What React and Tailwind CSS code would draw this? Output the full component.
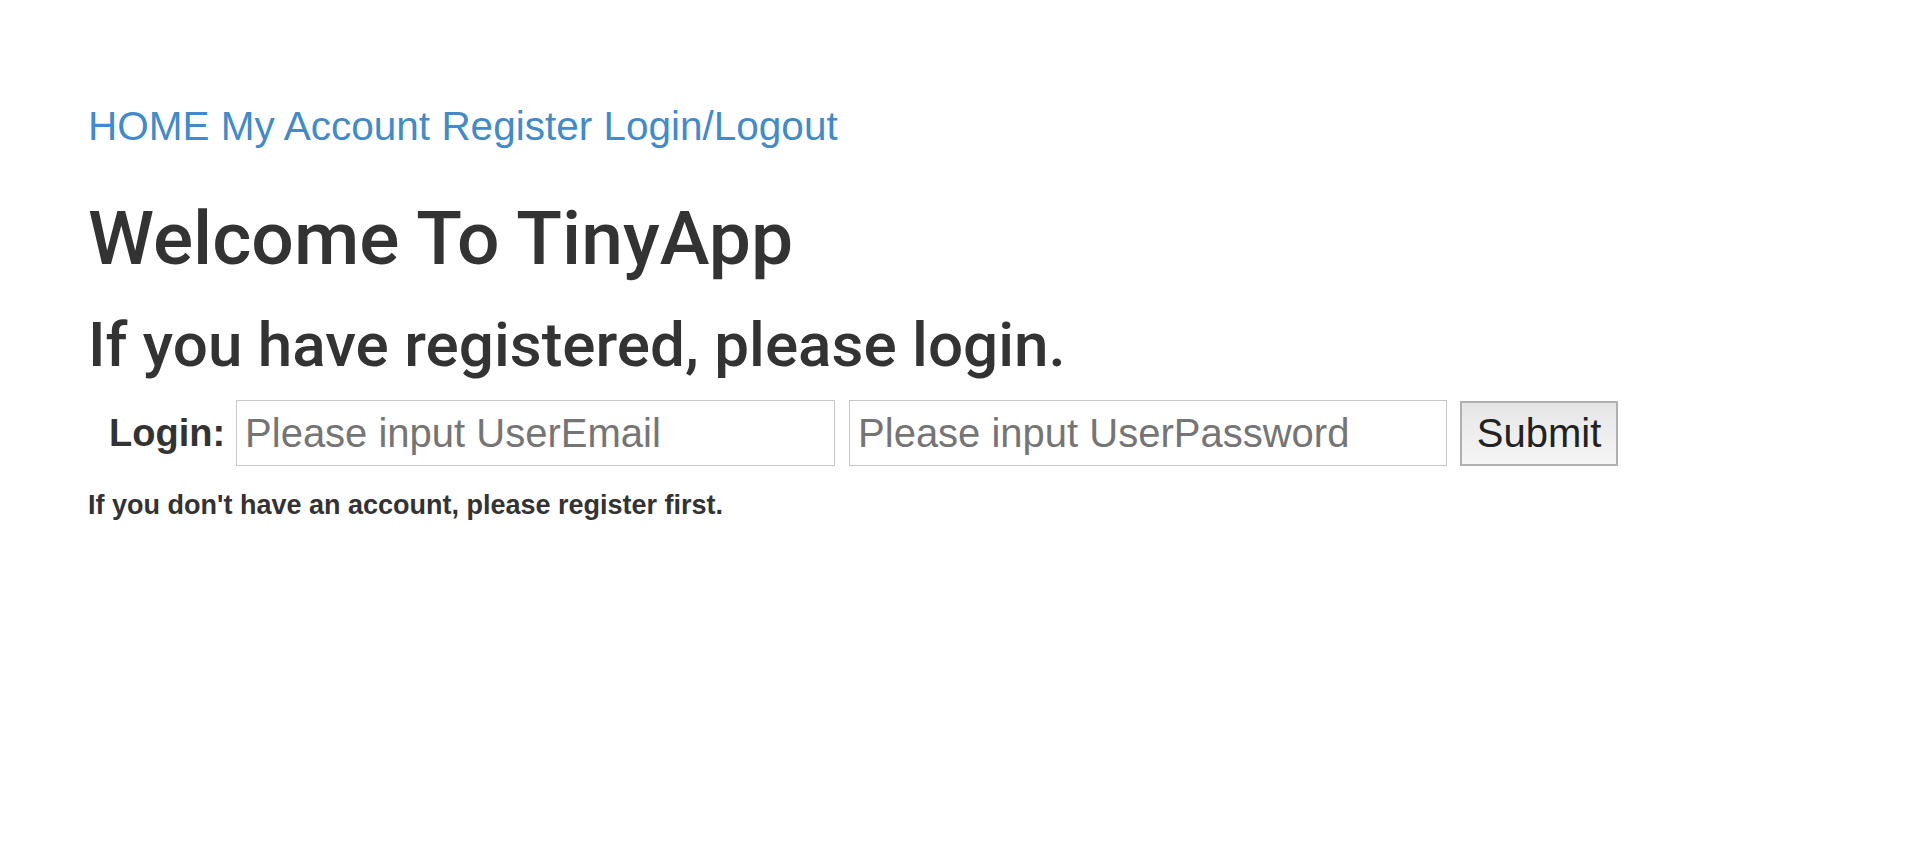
import React from 'react';

// --- Main App Component ---
export default function App() {
  return (
    <div className="min-h-screen bg-white text-[#333333] font-['Liberation_Sans',Arial,sans-serif] pl-[88px] pt-[104px]">
      <Nav />
      <h1 className="mt-[49px] text-[75px] leading-[82px] font-medium font-['Roboto','Liberation_Sans',sans-serif]">Welcome To TinyApp</h1>
      <h2 className="mt-[32px] text-[62px] leading-[68px] font-medium font-['Roboto','Liberation_Sans',sans-serif]">If you have registered, please login.</h2>
      <LoginForm />
      <p className="mt-[23px] text-[27px] leading-[33px] font-bold">If you don't have an account, please register first.</p>
    </div>
  );
}

// --- UI Components ---

const Nav = () => (
  <nav className="text-[40.5px] leading-[44px] text-[#428bca]">
    <a href="#" className="hover:underline">HOME</a>{' '}
    <a href="#" className="hover:underline">My Account</a>{' '}
    <a href="#" className="hover:underline">Register</a>{' '}
    <a href="#" className="hover:underline">Login/Logout</a>
  </nav>
);

const LoginForm = () => (
  <form className="mt-[21px] flex items-center pl-[21px]" onSubmit={(e) => e.preventDefault()}>
    <label className="text-[38px] font-bold mr-[11px]">Login:</label>
    <input
      type="text"
      placeholder="Please input UserEmail"
      className="w-[599px] h-[66px] border border-[#c8c8c8] px-[8px] text-[40px] placeholder:text-[#757575] outline-none"
    />
    <input
      type="password"
      placeholder="Please input UserPassword"
      className="ml-[14px] w-[598px] h-[66px] border border-[#c8c8c8] px-[8px] text-[40px] placeholder:text-[#757575] outline-none"
    />
    <button
      type="submit"
      className="ml-[13px] w-[158px] h-[65px] border-2 border-[#b0b0b0] bg-gradient-to-b from-[#e6e6e6] to-[#f5f5f5] text-[40px] text-[#222222]"
    >
      Submit
    </button>
  </form>
);
